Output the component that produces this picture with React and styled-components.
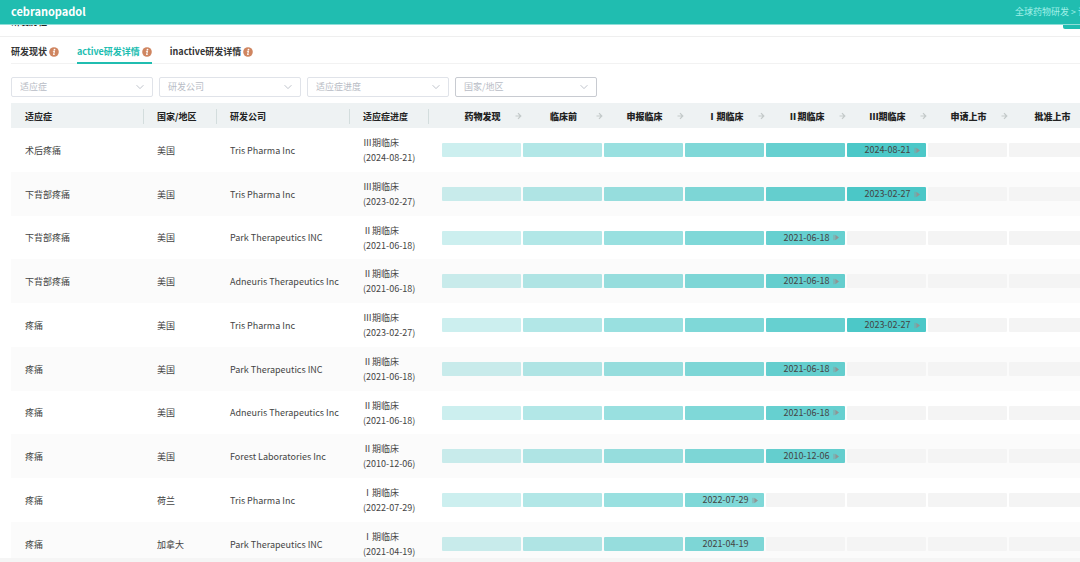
import React from 'react';
import styled, { createGlobalStyle } from 'styled-components';

const GlobalStyle = createGlobalStyle`
  * {
    box-sizing: border-box;
  }

  body {
    margin: 0;
    background: #fff;
    color: #444;
    font: 9px/15px 'Noto Sans CJK SC', sans-serif;
  }
`;

const Page = styled.div`
  display: flex;
  flex-direction: column;
  height: 100vh;
  overflow: hidden;
`;

const TopBar = styled.header`
  display: flex;
  flex: none;
  align-items: center;
  justify-content: space-between;
  height: 24px;
  padding: 0 0 2px 11px;
  background: #20bdb0;
  box-shadow: 0 1px 0 #8fded8;
  z-index: 1;
`;

const DrugName = styled.h1`
  margin: 0;
  color: #fff;
  font-size: 11px;
  font-weight: 700;
`;

const Breadcrumb = styled.nav`
  width: 65px;
  overflow: hidden;
  color: #a0f0e8;
  white-space: nowrap;

  a {
    color: inherit;
    text-decoration: none;
  }
`;

const SectionHead = styled.div`
  display: flex;
  flex: none;
  align-items: flex-end;
  justify-content: space-between;
  height: 13px;
  padding: 0 0 7px 11px;
  border-bottom: 1px solid #efefef;
  overflow: hidden;
`;

const SectionTitle = styled.h2`
  margin: 0;
  padding-bottom: 2px;
  color: #222;
  font-size: 9px;
  line-height: 11px;
`;

const ExportButton = styled.button`
  width: 17px;
  height: 20px;
  padding: 0;
  border: 0;
  border-radius: 2px 0 0 2px;
  background: #20bdb0;
`;

const Tabs = styled.div`
  display: flex;
  flex: none;
  gap: 18px;
  height: 27px;
  margin: 0 0 0 11px;
  padding-top: 4px;
  border-bottom: 1px solid #f2f2f2;
`;

const Tab = styled.button`
  display: flex;
  align-items: center;
  gap: 2px;
  height: 23px;
  padding: 0;
  border: 0;
  border-bottom: 2px solid ${props => (props.$active ? '#20bdb0' : 'transparent')};
  background: none;
  color: ${props => (props.$active ? '#20bdb0' : '#333')};
  font: inherit;
  font-weight: 700;
`;

const Filters = styled.form`
  display: flex;
  flex: none;
  gap: 6px;
  padding: 13px 11px 6px;
`;

const Field = styled.label`
  display: flex;
  align-items: center;
  width: 142px;
  height: 20px;
  padding-right: 8px;
  border: 1px solid ${props => (props.$hover ? '#c8cbd1' : '#e0e3e9')};
  border-radius: 2px;
`;

const Select = styled.select`
  flex: 1;
  height: 18px;
  padding: 0 0 1px 8px;
  border: 0;
  outline: 0;
  appearance: none;
  background: none;
  color: #b8bcc5;
  font: inherit;
`;

const TableArea = styled.main`
  flex: 1;
  min-height: 0;
  margin-left: 11px;
  overflow: hidden;
`;

const Table = styled.table`
  width: 1085px;
  border-collapse: collapse;
  table-layout: fixed;
`;

const Col = styled.col`
  width: ${props => props.$width}px;
`;

const HeadCell = styled.th`
  height: 25px;
  padding: 1px 0 0 13px;
  background: #eef2f3;
  color: #222;
  font-weight: 700;
  text-align: left;

  &:first-child {
    padding-left: 14px;
  }

  &:nth-child(4) {
    padding-right: 13px;
  }
`;

const HeadLabel = styled.span`
  display: block;
  border-right: 1px solid #d3dddd;
`;

const StageHead = styled(HeadCell)`
  padding: 1px 0 0;
`;

const StageLabel = styled.span`
  display: grid;
  grid-template-columns: 8px 1fr 8px;
  align-items: center;
  text-align: center;

  svg {
    grid-column: 3;
    grid-row: 1;
  }

  b {
    grid-column: 1 / 4;
    grid-row: 1;
  }
`;

const Row = styled.tr`
  height: 44px;

  &:nth-child(even) {
    background: #fbfbfb;
  }

  &:nth-child(4n + 3) {
    height: 43px;
  }
`;

const Cell = styled.td`
  padding: 0 0 0 13px;
  white-space: nowrap;

  &:first-child {
    padding-left: 14px;
  }
`;

const StageCell = styled.td`
  padding: 0 2px 0 0;
`;

const Bar = styled.div`
  display: grid;
  grid-template-columns: 14px 1fr 12px;
  align-items: center;
  height: 14px;
  border-radius: 1px;
  background: ${props => (props.$filled ? `rgba(0, 177, 177, ${props.$alpha})` : '#f4f4f4')};
  line-height: 14px;
  text-align: center;

  time {
    grid-column: 2;
  }
`;

const BottomTrack = styled.div`
  flex: none;
  height: 4px;
  background: #f5f5f5;
`;

const InfoIcon = () => (
  <svg width="10" height="10" viewBox="0 0 10 10" aria-hidden="true">
    <circle cx="5" cy="5" r="4.8" fill="#cf8560" />
    <circle cx="5.5" cy="2.6" r="0.9" fill="#fff" />
    <path d="M3.9 4.3h1.5L4.7 7.5h1" fill="none" stroke="#fff" strokeWidth="1.1" />
  </svg>
);

const Chevron = () => (
  <svg width="8" height="8" viewBox="0 0 8 8" aria-hidden="true">
    <path d="M.6 2.2 4 5.6l3.4-3.4" fill="none" stroke="#b8bcc5" strokeWidth=".9" />
  </svg>
);

const StageArrow = () => (
  <svg width="7" height="8" viewBox="0 0 7 8" aria-hidden="true">
    <path d="M.5 4h5M3 1.2 5.8 4 3 6.8" fill="none" stroke="#c3c9c9" strokeWidth="1.2" />
  </svg>
);

const PlayIcon = () => (
  <svg width="7" height="7" viewBox="0 0 7 7" aria-hidden="true">
    <path d="M1 .8v5.4" stroke="#909898" strokeWidth=".8" />
    <path d="M2.3.8 6 3.5 2.3 6.2z" fill="#909494" />
  </svg>
);

const tabs = ['研发现状', 'active研发详情', 'inactive研发详情'];
const filters = ['适应症', '研发公司', '适应症进度', '国家/地区'];
const columns = ['适应症', '国家/地区', '研发公司', '适应症进度'];
const stages = ['药物发现', '临床前', '申报临床', 'Ⅰ期临床', 'Ⅱ期临床', 'Ⅲ期临床', '申请上市', '批准上市'];
const widths = [133, 73, 133, 92, 81, 81, 81, 81, 81, 81, 81, 87];

const rows = [
  { indication: '术后疼痛', country: '美国', company: 'Tris Pharma Inc', stage: 5, date: '2024-08-21' },
  { indication: '下背部疼痛', country: '美国', company: 'Tris Pharma Inc', stage: 5, date: '2023-02-27' },
  { indication: '下背部疼痛', country: '美国', company: 'Park Therapeutics INC', stage: 4, date: '2021-06-18' },
  { indication: '下背部疼痛', country: '美国', company: 'Adneuris Therapeutics Inc', stage: 4, date: '2021-06-18' },
  { indication: '疼痛', country: '美国', company: 'Tris Pharma Inc', stage: 5, date: '2023-02-27' },
  { indication: '疼痛', country: '美国', company: 'Park Therapeutics INC', stage: 4, date: '2021-06-18' },
  { indication: '疼痛', country: '美国', company: 'Adneuris Therapeutics Inc', stage: 4, date: '2021-06-18' },
  { indication: '疼痛', country: '美国', company: 'Forest Laboratories Inc', stage: 4, date: '2010-12-06' },
  { indication: '疼痛', country: '荷兰', company: 'Tris Pharma Inc', stage: 3, date: '2022-07-29' },
  { indication: '疼痛', country: '加拿大', company: 'Park Therapeutics INC', stage: 3, date: '2021-04-19', last: true },
];

const TrialRow = ({ trial }) => (
  <Row>
    <Cell>{trial.indication}</Cell>
    <Cell>{trial.country}</Cell>
    <Cell>{trial.company}</Cell>
    <Cell>
      {stages[trial.stage]}
      <br />({trial.date})
    </Cell>
    {stages.map((stage, i) => (
      <StageCell key={stage}>
        <Bar $filled={i <= trial.stage} $alpha={(i + 2) / 10}>
          {i === trial.stage && <time>{trial.date}</time>}
          {i === trial.stage && !trial.last && <PlayIcon />}
        </Bar>
      </StageCell>
    ))}
  </Row>
);

const App = () => (
  <Page>
    <GlobalStyle />
    <TopBar>
      <DrugName>cebranopadol</DrugName>
      <Breadcrumb>
        <a href="#drugs">全球药物研发</a> &gt; 详情
      </Breadcrumb>
    </TopBar>
    <SectionHead>
      <SectionTitle>研发历程</SectionTitle>
      <ExportButton aria-label="导出" />
    </SectionHead>
    <Tabs role="tablist">
      {tabs.map((tab, i) => (
        <Tab key={tab} role="tab" aria-selected={i === 1} $active={i === 1}>
          {tab}
          <InfoIcon />
        </Tab>
      ))}
    </Tabs>
    <Filters>
      {filters.map((filter, i) => (
        <Field key={filter} $hover={i === 3}>
          <Select aria-label={filter}>
            <option>{filter}</option>
          </Select>
          <Chevron />
        </Field>
      ))}
    </Filters>
    <TableArea>
      <Table>
        <colgroup>
          {widths.map((width, i) => (
            <Col key={i} $width={width} />
          ))}
        </colgroup>
        <thead>
          <tr>
            {columns.map(column => (
              <HeadCell key={column}>
                <HeadLabel>{column}</HeadLabel>
              </HeadCell>
            ))}
            {stages.map((stage, i) => (
              <StageHead key={stage}>
                <StageLabel>
                  <b>{stage}</b>
                  {i < stages.length - 1 && <StageArrow />}
                </StageLabel>
              </StageHead>
            ))}
          </tr>
        </thead>
        <tbody>
          {rows.map((trial, i) => (
            <TrialRow key={i} trial={trial} />
          ))}
        </tbody>
      </Table>
    </TableArea>
    <BottomTrack />
  </Page>
);

export default App;
